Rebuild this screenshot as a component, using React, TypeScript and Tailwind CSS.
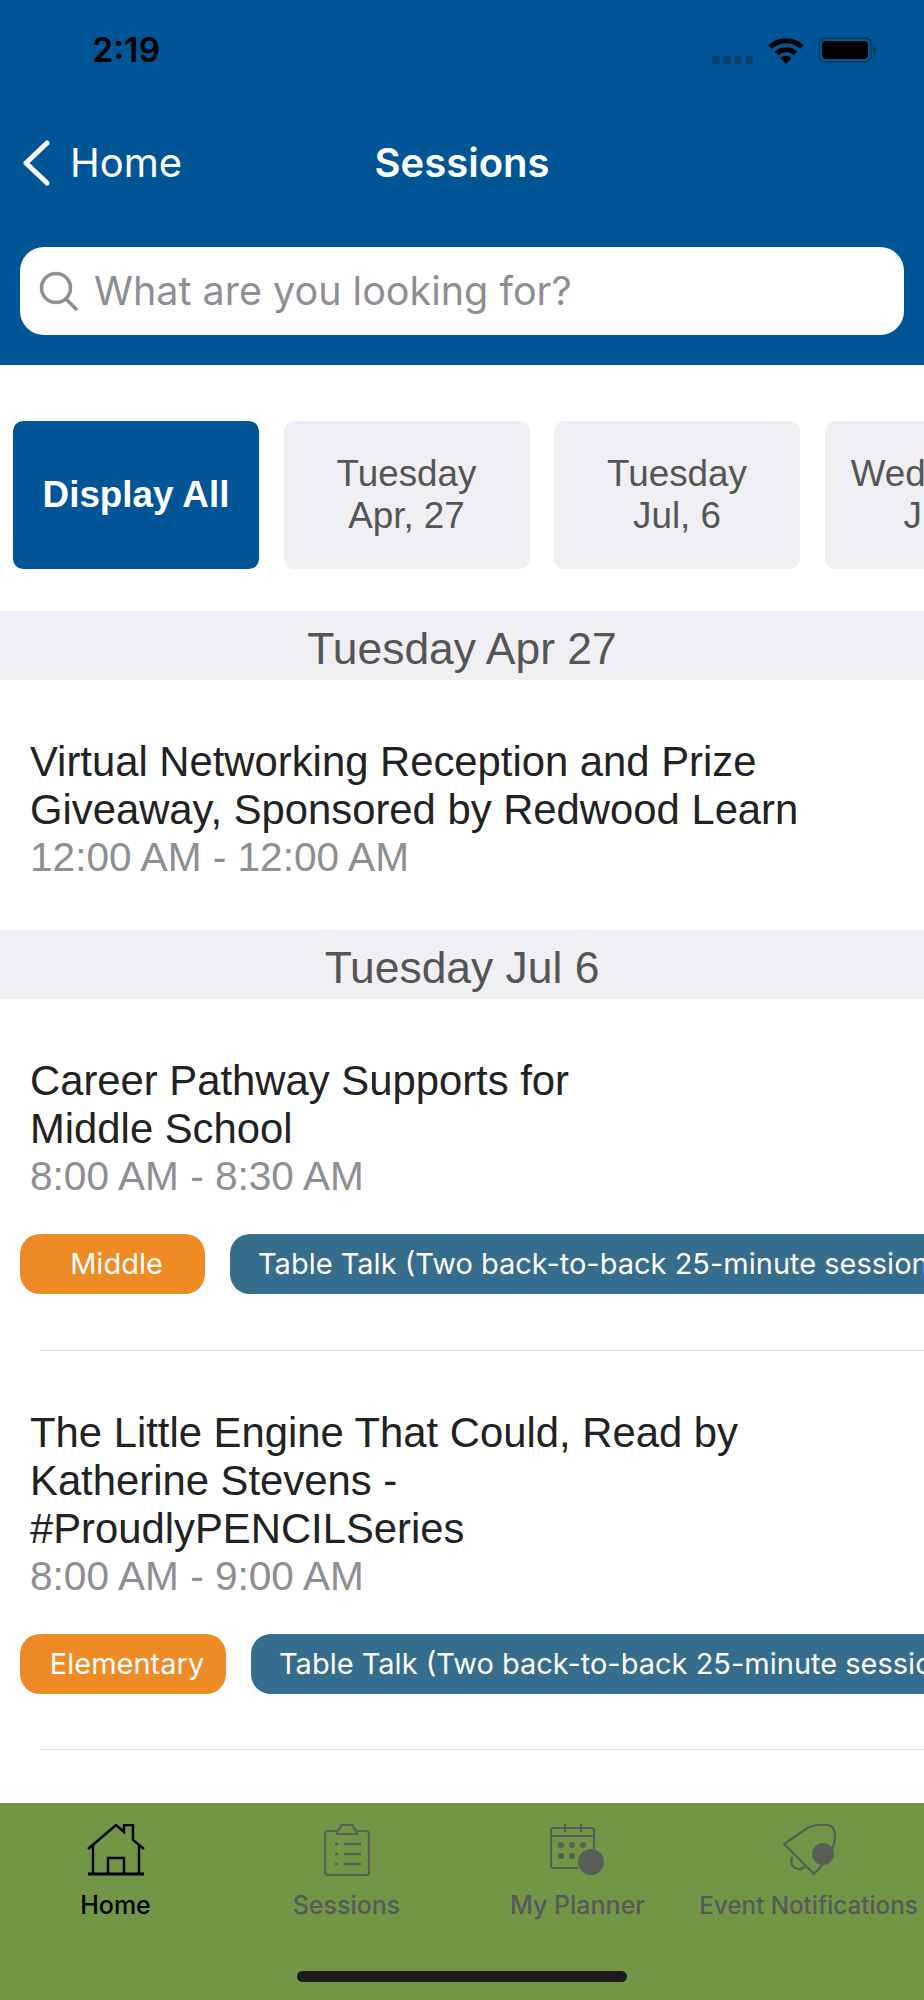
const sans = "font-['Liberation_Sans',Arial,sans-serif]";
const ui = "font-['Inter','Noto_Sans',sans-serif]";

function StatusBar() {
    return (
        <div className="flex h-[100px] items-center justify-between pl-[92px] pr-[48px]">
            <span className={`${ui} text-[34px] font-semibold leading-none text-black`}>2:19</span>
            <div className="flex items-center">
                <div className="mr-[15px] mt-[19px] flex gap-[3px]">
                    {[0, 1, 2, 3].map((i) => (
                        <div key={i} className="h-[8px] w-[8px] rounded-[2px] bg-[#0a3f68]" />
                    ))}
                </div>
                <svg width="36" height="27" viewBox="0 0 36 27" className="mr-[14px]">
                    <path d="M2 10C11 1.5 25 1.5 34 10" fill="none" stroke="black" strokeWidth="5" />
                    <path d="M8.5 16.5C13.5 11.5 22.5 11.5 27.5 16.5" fill="none" stroke="black" strokeWidth="5" />
                    <path d="M12.5 21C15.5 18 20.5 18 23.5 21L18 27Z" fill="black" />
                </svg>
                <div className="flex items-center">
                    <div className="h-[26px] w-[54px] rounded-[7px] border-2 border-[#0a3f68] p-[2px]">
                        <div className="h-full w-full rounded-[4px] bg-black" />
                    </div>
                    <div className="ml-[1px] h-[9px] w-[3px] rounded-r-full bg-[#0a3f68]" />
                </div>
            </div>
        </div>
    );
}

function Header() {
    return (
        <div className="bg-[#005596] pb-[30px]">
            <StatusBar />
            <div className="relative mt-[31px] flex h-[64px] items-center pl-[22px] text-white">
                <svg width="28" height="46" viewBox="0 0 28 46" fill="none" stroke="white" strokeWidth="5" strokeLinecap="round" strokeLinejoin="round">
                    <path d="M25 3L4 23L25 43" />
                </svg>
                <span className={`${ui} ml-[20px] text-[40px] leading-none`}>Home</span>
                <span className={`${ui} absolute left-0 right-0 text-center text-[40px] font-semibold leading-none`}>Sessions</span>
            </div>
            <div className="mx-[20px] mt-[52px] flex h-[88px] items-center rounded-[24px] bg-white pl-[19px]">
                <svg width="40" height="40" viewBox="0 0 40 40" fill="none" stroke="#8e8e93" strokeWidth="3.5" strokeLinecap="round">
                    <circle cx="17" cy="17" r="14.5" />
                    <path d="M27 28L37 38" />
                </svg>
                <span className={`${ui} ml-[15px] pt-[2px] text-[39.5px] leading-none text-[#8e8e93]`}>What are you looking for?</span>
            </div>
        </div>
    );
}

function DateFilters() {
    const dates = [
        ["Tuesday", "Apr, 27"],
        ["Tuesday", "Jul, 6"],
        ["Wednesday", "Jul, 7"],
    ];
    return (
        <div className="flex gap-[24.5px] overflow-hidden pb-[42px] pl-[13px] pt-[56px]">
            <div className={`${sans} flex h-[148px] w-[246px] shrink-0 items-center justify-center rounded-[10px] bg-[#005596] text-[36.8px] font-bold text-white`}>
                Display All
            </div>
            {dates.map((d, i) => (
                <div key={i} className={`${sans} flex h-[148px] w-[246px] shrink-0 flex-col items-center justify-center rounded-[10px] bg-[#efeff4] text-[36.8px] leading-[42px] text-[#555555]`}>
                    <span>{d[0]}</span>
                    <span>{d[1]}</span>
                </div>
            ))}
        </div>
    );
}

function SectionHeader({ label }: { label: string }) {
    return (
        <div className={`${sans} flex h-[69px] items-center justify-center bg-[#efeff4] pt-[7px] text-[44.4px] text-[#555555]`}>
            {label}
        </div>
    );
}

function SessionRow({ title, time, tags }: { title: string[]; time: string; tags?: { label: string; box: string }[] }) {
    return (
        <div>
            <div className={`${sans} pl-[30px] text-[41.8px] leading-[48px] text-[#222222]`}>
                {title.map((line) => (
                    <div key={line} className="whitespace-nowrap">{line}</div>
                ))}
                <div className="text-[40.6px] leading-[46px] text-[#8e8e93]">{time}</div>
            </div>
            {tags && (
                <div className="mt-[35px] flex gap-[25px] overflow-hidden pl-[20px]">
                    {tags.map((t) => (
                        <div key={t.label} className={`${ui} ${t.box} flex h-[60px] shrink-0 items-center whitespace-nowrap rounded-[20px] text-[29px] text-white`}>
                            {t.label}
                        </div>
                    ))}
                </div>
            )}
        </div>
    );
}

function TabBar() {
    const dim = "#565a5c";
    return (
        <div className="bg-[#739646] pt-[21px]">
            <div className="flex h-[94px] text-[25px]">
                <div className="flex w-[231px] flex-col items-center">
                    <svg width="58" height="52" viewBox="0 0 58 52" fill="none" stroke="black" strokeWidth="2.4">
                        <path d="M1 25L29 1L37 8V1H46V16L57 25" />
                        <path d="M6 21V50M52 21V50" />
                        <path d="M1 50H57" strokeWidth="3" />
                        <path d="M21 50V34H37V50" />
                    </svg>
                    <span className={`${ui} mt-[17px] font-medium leading-none text-black`}>Home</span>
                </div>
                <div className="flex w-[231px] flex-col items-center">
                    <svg width="46" height="52" viewBox="0 0 46 52" fill="none" stroke={dim} strokeWidth="2.2" className="opacity-85">
                        <path d="M13 7H4Q1 7 1 10V48Q1 51 4 51H42Q45 51 45 48V10Q45 7 42 7H33" />
                        <path d="M13 10V7Q16 6 17 1H29Q30 6 33 7V10Z" />
                        <path d="M11 20H14M20 20H37M11 30H14M20 30H37M11 40H14M20 40H37" strokeWidth="2.6" />
                    </svg>
                    <span className={`${ui} mt-[17px] font-medium leading-none text-[#565a5c]`}>Sessions</span>
                </div>
                <div className="flex w-[231px] flex-col items-center">
                    <svg width="56" height="52" viewBox="0 0 56 52" fill="none" stroke={dim} strokeWidth="2.2" className="opacity-90">
                        <path d="M28 44H3Q1 44 1 42V6Q1 4 3 4H42Q44 4 44 6V30" />
                        <path d="M1 12H44M15 0V8M31 0V8" />
                        <circle cx="11" cy="21" r="3" fill={dim} stroke="none" />
                        <circle cx="22" cy="21" r="3" fill={dim} stroke="none" />
                        <circle cx="33" cy="21" r="3" fill={dim} stroke="none" />
                        <circle cx="11" cy="32" r="3" fill={dim} stroke="none" />
                        <circle cx="22" cy="32" r="3" fill={dim} stroke="none" />
                        <circle cx="41" cy="38" r="13" fill={dim} stroke="none" />
                    </svg>
                    <span className={`${ui} mt-[17px] font-medium leading-none text-[#565a5c]`}>My Planner</span>
                </div>
                <div className="flex w-[231px] flex-col items-center">
                    <svg width="56" height="52" viewBox="0 0 56 52" fill="none" stroke={dim} strokeWidth="2.2" className="opacity-90">
                        <path d="M3 20L28 3Q36 0 47 1Q53 2 54 10Q55 28 33 50Z" />
                        <path d="M11 33Q8 43 17 45Q21 46 24 42" />
                        <circle cx="42" cy="30" r="11" fill={dim} stroke="none" />
                    </svg>
                    <span className={`${ui} mt-[17px] whitespace-nowrap text-[24.2px] font-medium leading-[25px] text-[#565a5c]`}>Event Notifications</span>
                </div>
            </div>
            <div className="flex h-[82px] items-start justify-center pt-[53px]">
                <div className="h-[11px] w-[330px] shrink-0 rounded-full bg-[#1c1c1e]" />
            </div>
        </div>
    );
}

const tableTalk = "Table Talk (Two back-to-back 25-minute sessions)";

export default function App() {
    return (
        <div className="flex h-[2000px] w-[924px] flex-col overflow-hidden bg-white">
            <Header />
            <DateFilters />
            <SectionHeader label="Tuesday Apr 27" />
            <div className="pb-[50px] pt-[58px]">
                <SessionRow title={["Virtual Networking Reception and Prize", "Giveaway, Sponsored by Redwood Learn"]} time="12:00 AM - 12:00 AM" />
            </div>
            <SectionHeader label="Tuesday Jul 6" />
            <div className="flex-1 overflow-hidden pt-[58px]">
                <SessionRow
                    title={["Career Pathway Supports for", "Middle School"]}
                    time="8:00 AM - 8:30 AM"
                    tags={[
                        { label: "Middle", box: "w-[185px] justify-center pl-[8px] bg-[#ee8b25]" },
                        { label: tableTalk, box: "px-[28px] bg-[#366c8c]" },
                    ]}
                />
                <div className="ml-[40px] mt-[56px] h-px bg-[#dedede]" />
                <div className="pt-[58px]">
                    <SessionRow
                        title={["The Little Engine That Could, Read by", "Katherine Stevens -", "#ProudlyPENCILSeries"]}
                        time="8:00 AM - 9:00 AM"
                        tags={[
                            { label: "Elementary", box: "w-[206px] justify-center pl-[8px] bg-[#ee8b25]" },
                            { label: tableTalk, box: "px-[28px] bg-[#366c8c]" },
                        ]}
                    />
                </div>
                <div className="ml-[40px] mt-[55px] h-px bg-[#dedede]" />
            </div>
            <TabBar />
        </div>
    );
}
